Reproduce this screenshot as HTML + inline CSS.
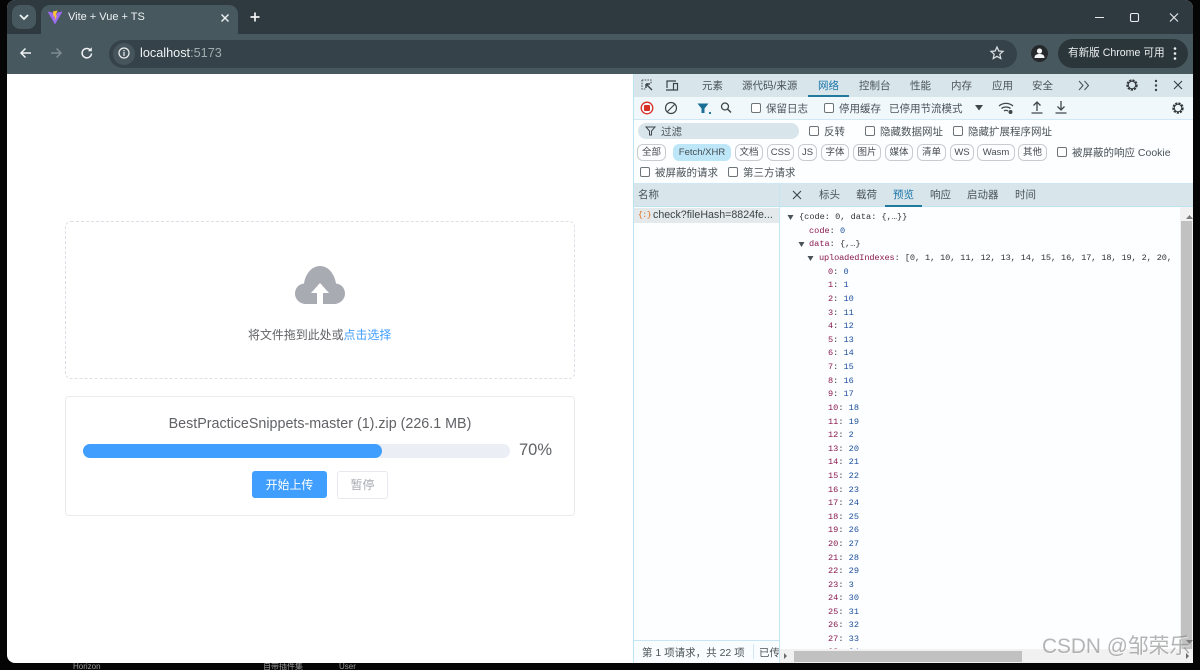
<!DOCTYPE html>
<html lang="zh"><head><meta charset="utf-8"><title>Vite + Vue + TS</title>
<style>
html,body{margin:0;padding:0;width:1200px;height:670px;overflow:hidden;background:#050505}
*{box-sizing:border-box}
body{font-family:"Liberation Sans","Noto Sans CJK SC",sans-serif;position:relative}
.a{position:absolute;white-space:nowrap}
svg{position:absolute;overflow:visible}
.t{font-size:10.5px;color:#4a5358;line-height:14px;margin-top:1px}
.tab{font-size:10.5px;color:#4a5358;line-height:14px;margin-top:1px}
.pill{position:absolute;top:144px;height:17px;border:1px solid #c8ccce;border-radius:6px;font-size:9.5px;color:#454c50;line-height:15px;text-align:center;background:#fdfeff}
.cb{position:absolute;width:10px;height:10px;border:1px solid #6c7478;border-radius:2px;background:#fff}
.r{position:absolute;font-family:"Liberation Mono","Noto Sans CJK SC",monospace;font-size:8.6px;line-height:12px;white-space:pre;color:#333;margin-top:1px}
.k{color:#8a1a50}.n{color:#1c4f9e}
</style></head><body>
<!-- window -->
<div class="a" style="left:7px;top:0;width:1186px;height:663px;background:#fff;border-radius:8px;overflow:hidden">
<div class="a" style="left:0;top:0;width:1186px;height:34px;background:#2f3a40"></div>
<div class="a" style="left:0;top:34px;width:1186px;height:40px;background:#47585f"></div>
</div>
<div class="a" style="left:12px;top:5px;width:24px;height:24px;background:#47585f;border-radius:8px"></div>
<svg style="left:0;top:0" width="60" height="40"><path d="M20 15l4 4 4-4" fill="none" stroke="#eef2f3" stroke-width="1.8"/></svg>
<div class="a" style="left:41px;top:5px;width:197px;height:30px;background:#47585f;border-radius:9px 9px 0 0"></div>
<svg style="left:47px;top:10px" width="16" height="15" viewBox="0 0 16 15"><path d="M0.5 1.5L8 14.5 15.5 1.5 11 2.2 8 5 5 2.2z" fill="#9a6bf0"/><path d="M6 1.5L10.5 0.5 8.5 5.5 10 5.5 7.5 11 8 6.5 6.5 6.5z" fill="#ffc62e"/></svg>
<div class="a" style="left:68px;top:10px;font-size:11px;line-height:15px;color:#eef2f4">Vite + Vue + TS</div>
<svg style="left:220px;top:13px" width="10" height="10"><path d="M1.5 1.5l7 7M8.500 1.500l-7 7" stroke="#f0f3f4" stroke-width="1.4"/></svg>
<svg style="left:249px;top:11px" width="12" height="12"><path d="M6 1.500v9M1.500 6h9" stroke="#f2f4f5" stroke-width="1.700"/></svg>
<svg style="left:1095px;top:12px" width="90" height="12"><path d="M0 5.500h9" stroke="#e8ecee" stroke-width="1"/><rect x="35.500" y="1.500" width="8" height="8" rx="1.500" fill="none" stroke="#e8ecee" stroke-width="1.100"/><path d="M75 1.500l8 8M83 1.500l-8 8" stroke="#e8ecee" stroke-width="1.100"/></svg>
<!-- nav icons -->
<svg style="left:18px;top:46px" width="16" height="14"><path d="M13 7H3M7.500 2.500L3 7l4.500 4.500" fill="none" stroke="#f0f3f4" stroke-width="1.500"/></svg>
<svg style="left:48px;top:46px" width="16" height="14"><path d="M3 7h10M8.500 2.500L13 7l-4.500 4.500" fill="none" stroke="#7f8c92" stroke-width="1.500"/></svg>
<svg style="left:80px;top:46px" width="14" height="14"><path d="M11.500 7.500a4.700 4.700 0 1 1-1.300-3.600" fill="none" stroke="#f0f3f4" stroke-width="1.500"/><path d="M11.800 1.200v4h-4z" fill="#f0f3f4"/></svg>
<div class="a" style="left:109px;top:40px;width:908px;height:28px;background:#354249;border-radius:14px"></div>
<div class="a" style="left:113px;top:43px;width:22px;height:22px;background:#46555c;border-radius:11px"></div>
<svg style="left:117px;top:46px" width="14" height="14"><circle cx="7" cy="7" r="5" fill="none" stroke="#eef1f2" stroke-width="1.200"/><path d="M7 6v4M7 4v1.200" stroke="#eef1f2" stroke-width="1.200"/></svg>
<div class="a" style="left:140px;top:45px;font-size:12.700px;line-height:17px;color:#eef2f4">localhost<span style="color:#a3adb1">:5173</span></div>
<svg style="left:990px;top:46px" width="14" height="14" viewBox="0 0 14 14"><path d="M7 1l1.800 4 4.200.4-3.200 2.800 1 4.300L7 10.300 3.200 12.500l1-4.300L1 5.400 5.200 5z" fill="none" stroke="#dfe4e6" stroke-width="1.200"/></svg>
<div class="a" style="left:1031px;top:45px;width:17px;height:17px;background:#26292c;border-radius:50%"></div>
<svg style="left:1033px;top:47px" width="13" height="13"><circle cx="6.500" cy="4" r="2.600" fill="#f2f4f5"/><path d="M1.500 11c0-3 2-4 5-4s5 1 5 4z" fill="#f2f4f5"/></svg>
<div class="a" style="left:1058px;top:39px;width:130px;height:29px;background:#2b363b;border-radius:14.500px"></div>
<div class="a" style="left:1068px;top:46px;font-size:10.600px;line-height:15px;color:#eef1f2">有新版 Chrome 可用</div>
<svg style="left:1172px;top:46px" width="6" height="15"><circle cx="3" cy="2.500" r="1.300" fill="#f0f3f4"/><circle cx="3" cy="7.500" r="1.300" fill="#f0f3f4"/><circle cx="3" cy="12.500" r="1.300" fill="#f0f3f4"/></svg>
<!-- page content -->
<div class="a" style="left:65px;top:221px;width:510px;height:158px;border:1px dashed #dcdfe6;border-radius:6px"></div>
<svg style="left:295px;top:266px" width="50" height="38" viewBox="0 0 50 38"><path d="M11 38C4.500 38 0 33 0 27.500 0 22 4 18 9 17.500 10.500 7.500 17 0 25 0s14.500 7.500 16 17.500c5 .5 9 4.500 9 10C50 33 45.500 38 39 38z" fill="#a8abb2"/><path d="M25 17L16 27h6v11h6V27h6z" fill="#fff"/></svg>
<div class="a" style="left:248px;top:327px;font-size:11.950px;line-height:17px;color:#606266">将文件拖到此处或<span style="color:#409eff">点击选择</span></div>
<div class="a" style="left:65px;top:396px;width:510px;height:120px;border:1px solid #e9ebef;border-radius:4px"></div>
<div class="a" style="left:65px;top:415px;width:510px;text-align:center;font-size:14.300px;line-height:18px;color:#606266">BestPracticeSnippets-master (1).zip (226.1 MB)</div>
<div class="a" style="left:83px;top:444px;width:427px;height:14px;background:#ebeef5;border-radius:7px"></div>
<div class="a" style="left:83px;top:444px;width:299px;height:14px;background:#409eff;border-radius:7px"></div>
<div class="a" style="left:519px;top:440px;font-size:16.500px;line-height:21px;color:#606266">70%</div>
<div class="a" style="left:252px;top:471px;width:75px;height:27px;background:#409eff;border-radius:3px;color:#fff;font-size:11.950px;line-height:28px;text-align:center">开始上传</div>
<div class="a" style="left:337px;top:471px;width:51px;height:28px;background:#fff;border:1px solid #e7e9ee;border-radius:3px;color:#a8abb2;font-size:11.950px;line-height:27px;text-align:center">暂停</div>
<!-- devtools -->
<div class="a" style="left:633px;top:74px;width:560px;height:589px;background:#fdfeff;border-left:1px solid #bfe3f2"></div>
<div class="a" style="left:634px;top:74px;width:559px;height:23px;background:#d8e6ec"></div>
<div class="a" style="left:634px;top:97px;width:559px;height:23px;background:#f0f8fc;border-bottom:1px solid #cfe8f4"></div>
<svg style="left:640px;top:78px" width="40" height="15"><path d="M2 2h9v4M2 2v9h4" fill="none" stroke="#4a5358" stroke-width="1.100" stroke-dasharray="1.500 1.200"/><path d="M6 6l6 6M6 6h4M6 6v4" fill="none" stroke="#3a4347" stroke-width="1.400"/><path d="M26 12h7M27 10V3h9" fill="none" stroke="#3a4347" stroke-width="1.200"/><rect x="33.500" y="5.500" width="4" height="6.500" fill="none" stroke="#3a4347" stroke-width="1.200"/></svg>
<div class="a tab" style="left:702px;top:78px">元素</div>
<div class="a tab" style="left:742px;top:78px">源代码/来源</div>
<div class="a tab" style="left:818px;top:78px;color:#1b75a8">网络</div>
<div class="a" style="left:808px;top:95px;width:41px;height:2px;background:#1f7a9e"></div>
<div class="a tab" style="left:859px;top:78px">控制台</div>
<div class="a tab" style="left:910px;top:78px">性能</div>
<div class="a tab" style="left:951px;top:78px">内存</div>
<div class="a tab" style="left:992px;top:78px">应用</div>
<div class="a tab" style="left:1032px;top:78px">安全</div>
<svg style="left:1078px;top:80px" width="12" height="11"><path d="M1 1l4 4.500-4 4.500M6.500 1l4 4.500-4 4.500" fill="none" stroke="#4a5358" stroke-width="1.100"/></svg>
<svg style="left:1125px;top:78px" width="14" height="14"><circle cx="7" cy="7" r="4.700" fill="none" stroke="#33393c" stroke-width="2" stroke-dasharray="2.200 1"/><circle cx="7" cy="7" r="3.700" fill="none" stroke="#33393c" stroke-width="1"/></svg>
<svg style="left:1153px;top:79px" width="6" height="13"><circle cx="3" cy="2" r="1.200" fill="#3a4347"/><circle cx="3" cy="6.500" r="1.200" fill="#3a4347"/><circle cx="3" cy="11" r="1.200" fill="#3a4347"/></svg>
<svg style="left:1173px;top:80px" width="10" height="10"><path d="M1 1l8 8M9 1l-8 8" stroke="#3a4347" stroke-width="1.200"/></svg>
<svg style="left:640px;top:101px" width="95" height="14"><circle cx="7" cy="7" r="5.800" fill="none" stroke="#d93025" stroke-width="1.300"/><rect x="4" y="4" width="6" height="6" rx="1" fill="#d93025"/><circle cx="31" cy="7" r="5.500" fill="none" stroke="#3f474b" stroke-width="1.200"/><path d="M27 11l8-8" stroke="#3f474b" stroke-width="1.200"/><path d="M57.500 2.500h11l-4 5v4.500h-3V7.500z" fill="#1a6f96"/><circle cx="70" cy="12" r="1.100" fill="#1a6f96"/><circle cx="85" cy="5.500" r="3.500" fill="none" stroke="#3f474b" stroke-width="1.300"/><path d="M87.500 8l3.500 3.500" stroke="#3f474b" stroke-width="1.500"/></svg>
<div class="cb" style="left:751px;top:103px"></div><div class="a t" style="left:766px;top:101px">保留日志</div>
<div class="cb" style="left:824px;top:103px"></div><div class="a t" style="left:839px;top:101px">停用缓存</div>
<div class="a t" style="left:889px;top:101px">已停用节流模式</div>
<svg style="left:975px;top:105px" width="8" height="6"><path d="M0 0h8L4 5.500z" fill="#3f474b"/></svg>
<svg style="left:998px;top:101px" width="16" height="14"><path d="M1 5c4-3.500 10-3.500 14 0M3.500 7.500c2.500-2 6.500-2 9 0M6 10c1-.8 3-.8 4 0" fill="none" stroke="#3f474b" stroke-width="1.200"/><circle cx="12.500" cy="11" r="2" fill="#3f474b"/></svg>
<svg style="left:1030px;top:100px" width="40" height="14"><path d="M7 11V2M3.500 5.500L7 2l3.500 3.500M1.500 13h11" fill="none" stroke="#3f474b" stroke-width="1.300"/><path d="M31 1v9M27.500 6.500L31 10l3.500-3.500M25.500 13h11" fill="none" stroke="#3f474b" stroke-width="1.300"/></svg>
<svg style="left:1171px;top:101px" width="14" height="14"><circle cx="7" cy="7" r="4.700" fill="none" stroke="#33393c" stroke-width="2" stroke-dasharray="2.200 1"/><circle cx="7" cy="7" r="3.700" fill="none" stroke="#33393c" stroke-width="1"/></svg>
<div class="a" style="left:638px;top:123px;width:161px;height:16px;background:#d8e6ec;border-radius:8px"></div>
<svg style="left:645px;top:126px" width="11" height="10"><path d="M1 1h9L6.500 5v4h-2V5z" fill="none" stroke="#3f474b" stroke-width="1"/></svg>
<div class="a t" style="left:661px;top:124px">过滤</div>
<div class="cb" style="left:809px;top:126px"></div><div class="a t" style="left:824px;top:124px">反转</div>
<div class="cb" style="left:865px;top:126px"></div><div class="a t" style="left:880px;top:124px">隐藏数据网址</div>
<div class="cb" style="left:953px;top:126px"></div><div class="a t" style="left:968px;top:124px">隐藏扩展程序网址</div>
<div class="pill" style="left:637px;width:29px">全部</div>
<div class="pill" style="left:673px;width:58px;background:#bde6f9;border-color:#bde6f9">Fetch/XHR</div>
<div class="pill" style="left:735px;width:28px">文档</div>
<div class="pill" style="left:767px;width:27px">CSS</div>
<div class="pill" style="left:798px;width:19px">JS</div>
<div class="pill" style="left:821px;width:28px">字体</div>
<div class="pill" style="left:853px;width:28px">图片</div>
<div class="pill" style="left:885px;width:28px">媒体</div>
<div class="pill" style="left:917px;width:29px">清单</div>
<div class="pill" style="left:950px;width:24px">WS</div>
<div class="pill" style="left:977px;width:38px">Wasm</div>
<div class="pill" style="left:1018px;width:29px">其他</div>
<div class="cb" style="left:1057px;top:147px"></div><div class="a t" style="left:1072px;top:145px">被屏蔽的响应 Cookie</div>
<div class="cb" style="left:640px;top:167px"></div><div class="a t" style="left:655px;top:165px">被屏蔽的请求</div>
<div class="cb" style="left:728px;top:167px"></div><div class="a t" style="left:743px;top:165px">第三方请求</div>
<div class="a" style="left:634px;top:183px;width:559px;height:24px;background:#d8e6ec;border-top:1px solid #cfe8f4;border-bottom:1px solid #bfe3f2"></div>
<div class="a" style="left:779px;top:183px;width:1px;height:480px;background:#c6e6f3"></div>
<div class="a t" style="left:638px;top:187px">名称</div>
<svg style="left:792px;top:190px" width="10" height="10"><path d="M1 1l8 8M9 1l-8 8" stroke="#3a4347" stroke-width="1.100"/></svg>
<div class="a tab" style="left:819px;top:187px">标头</div>
<div class="a tab" style="left:856px;top:187px">载荷</div>
<div class="a tab" style="left:893px;top:187px;color:#1b75a8">预览</div>
<div class="a" style="left:885px;top:205px;width:37px;height:2px;background:#1f7a9e"></div>
<div class="a tab" style="left:930px;top:187px">响应</div>
<div class="a tab" style="left:967px;top:187px">启动器</div>
<div class="a tab" style="left:1015px;top:187px">时间</div>
<div class="a" style="left:634px;top:208px;width:145px;height:15px;background:#e4e9ec"></div>
<div class="a" style="left:638px;top:209px;font-size:8px;letter-spacing:-.4px;line-height:13px;color:#e0701a;font-family:'Liberation Mono',monospace">{:}</div>
<div class="a" style="left:653px;top:208px;font-size:10.650px;line-height:15px;color:#3a4347">check?fileHash=8824fe...</div>
<!-- json preview -->
<svg style="left:786px;top:213px" width="30" height="52"><path d="M1.500 2h6L4.500 7zM12.500 29h6L15.500 34zM21.500 43h6L24.500 48z" fill="#4a5358"/></svg>
<div class="r" style="left:799px;top:210px">{code: 0, data: {,…}}</div>
<div class="r" style="left:809px;top:224px"><span class="k">code</span>: <span class="n">0</span></div>
<div class="r" style="left:809px;top:237px"><span class="k">data</span>: {,…}</div>
<div class="r" style="left:819px;top:251px"><span class="k" style="letter-spacing:-.12px">uploadedIndexes</span>: <span style="letter-spacing:-.12px">[0, 1, 10, 11, 12, 13, 14, 15, 16, 17, 18, 19, 2, 20,</span></div>
<div class="r" style="left:828px;top:265px"><span class="k">0</span>: <span class="n">0</span></div>
<div class="r" style="left:828px;top:278px"><span class="k">1</span>: <span class="n">1</span></div>
<div class="r" style="left:828px;top:292px"><span class="k">2</span>: <span class="n">10</span></div>
<div class="r" style="left:828px;top:306px"><span class="k">3</span>: <span class="n">11</span></div>
<div class="r" style="left:828px;top:319px"><span class="k">4</span>: <span class="n">12</span></div>
<div class="r" style="left:828px;top:333px"><span class="k">5</span>: <span class="n">13</span></div>
<div class="r" style="left:828px;top:346px"><span class="k">6</span>: <span class="n">14</span></div>
<div class="r" style="left:828px;top:360px"><span class="k">7</span>: <span class="n">15</span></div>
<div class="r" style="left:828px;top:374px"><span class="k">8</span>: <span class="n">16</span></div>
<div class="r" style="left:828px;top:387px"><span class="k">9</span>: <span class="n">17</span></div>
<div class="r" style="left:828px;top:401px"><span class="k">10</span>: <span class="n">18</span></div>
<div class="r" style="left:828px;top:415px"><span class="k">11</span>: <span class="n">19</span></div>
<div class="r" style="left:828px;top:428px"><span class="k">12</span>: <span class="n">2</span></div>
<div class="r" style="left:828px;top:442px"><span class="k">13</span>: <span class="n">20</span></div>
<div class="r" style="left:828px;top:455px"><span class="k">14</span>: <span class="n">21</span></div>
<div class="r" style="left:828px;top:469px"><span class="k">15</span>: <span class="n">22</span></div>
<div class="r" style="left:828px;top:483px"><span class="k">16</span>: <span class="n">23</span></div>
<div class="r" style="left:828px;top:496px"><span class="k">17</span>: <span class="n">24</span></div>
<div class="r" style="left:828px;top:510px"><span class="k">18</span>: <span class="n">25</span></div>
<div class="r" style="left:828px;top:523px"><span class="k">19</span>: <span class="n">26</span></div>
<div class="r" style="left:828px;top:537px"><span class="k">20</span>: <span class="n">27</span></div>
<div class="r" style="left:828px;top:551px"><span class="k">21</span>: <span class="n">28</span></div>
<div class="r" style="left:828px;top:564px"><span class="k">22</span>: <span class="n">29</span></div>
<div class="r" style="left:828px;top:578px"><span class="k">23</span>: <span class="n">3</span></div>
<div class="r" style="left:828px;top:591px"><span class="k">24</span>: <span class="n">30</span></div>
<div class="r" style="left:828px;top:605px"><span class="k">25</span>: <span class="n">31</span></div>
<div class="r" style="left:828px;top:618px"><span class="k">26</span>: <span class="n">32</span></div>
<div class="r" style="left:828px;top:632px"><span class="k">27</span>: <span class="n">33</span></div>
<div class="r" style="left:828px;top:645px"><span class="k">28</span>: <span class="n">34</span></div>
<!-- footer + scrollbars -->
<div class="a" style="left:634px;top:640px;width:145px;height:23px;background:#fafdff;border-top:1px solid #c6e6f3"></div>
<div class="a t" style="left:642px;top:645px">第 1 项请求，共 22 项</div>
<div class="a t" style="left:759px;top:645px;width:20px;overflow:hidden">已传输</div>
<div class="a" style="left:753px;top:644px;width:1px;height:15px;background:#cfe8f4"></div>
<div class="a" style="left:780px;top:649px;width:413px;height:14px;background:#f1f1f1"></div>
<div class="a" style="left:794px;top:651px;width:228px;height:11px;background:#c1c1c1"></div>
<div class="a" style="left:1180px;top:207px;width:13px;height:456px;background:#f1f1f1"></div>
<div class="a" style="left:1181px;top:221px;width:11px;height:428px;background:#c1c1c1"></div>
<svg style="left:783px;top:212px" width="410" height="451"><path d="M403 7l3.500-4 3.500 4zM403 428l3.500 4 3.500-4z" fill="#7d7d7d"/><path d="M4 444l-3 -3v6zM406 444l-3-3v6z" fill="#6a6a6a"/></svg>
<!-- watermark -->
<div class="a" style="left:1042px;top:634px;font-size:20.800px;line-height:26px;color:rgba(120,120,120,.55);text-shadow:1px 1px 1px rgba(255,255,255,.5)">CSDN @邹荣乐</div>
<!-- background peeks -->
<div class="a" style="left:73px;top:663px;font-size:8px;line-height:7px;height:7px;overflow:hidden;color:#9a9a9a">Horizon</div>
<div class="a" style="left:263px;top:663px;font-size:8px;line-height:7px;height:7px;overflow:hidden;color:#9a9a9a">自带插件集</div>
<div class="a" style="left:339px;top:663px;font-size:8px;line-height:7px;height:7px;overflow:hidden;color:#9a9a9a">User</div>
</body></html>
